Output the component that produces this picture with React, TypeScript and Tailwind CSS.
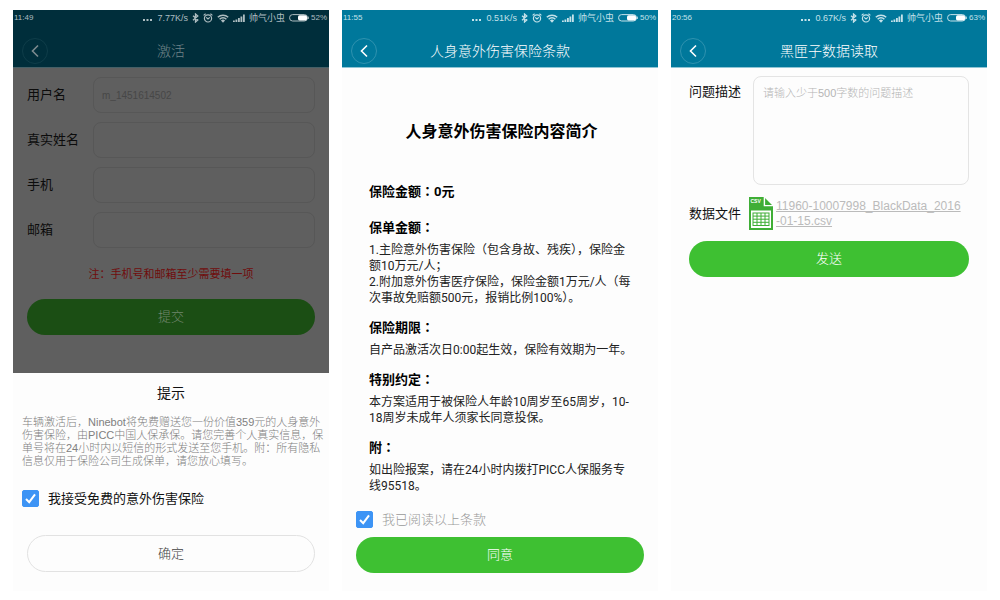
import type { ReactNode } from 'react';
import clsx from 'clsx';

type StatusBarProps = {
  time: string;
  speed: string;
  battery: string;
  dimmed?: boolean;
};

const StatusBar = ({ time, speed, battery, dimmed }: StatusBarProps) => {
  return (
    <div
      className={clsx(
        'flex h-4 items-center justify-between pl-px pr-0.5 text-[8px] leading-4',
        dimmed ? 'text-[#aebdc1]' : 'text-[#c5e2ea]',
      )}>
      <span>{time}</span>
      <div className="flex items-center gap-1">
        <svg width="10" height="8" viewBox="0 0 10 8" fill="currentColor">
          <rect x="0" y="5" width="2" height="2" />
          <rect x="3.5" y="5" width="2" height="2" />
          <rect x="7" y="5" width="2" height="2" />
        </svg>
        <span className="text-[9px]">{speed}</span>
        <svg
          width="7"
          height="10"
          viewBox="0 0 7 10"
          fill="none"
          stroke="currentColor"
          strokeWidth="1.3">
          <path d="M1 2.8 5.8 7 3.5 9V1l2.3 2L1 7.2" />
        </svg>
        <svg
          width="10"
          height="10"
          viewBox="0 0 10 10"
          fill="none"
          stroke="currentColor"
          strokeWidth="1.2">
          <circle cx="5" cy="5.4" r="3.6" />
          <path d="M3.2 4.4 5 6l1.8-1.6M.6 2.4 2.6.8M9.4 2.4 7.4.8" />
        </svg>
        <svg
          width="12"
          height="9"
          viewBox="0 0 12 9"
          fill="none"
          stroke="currentColor"
          strokeWidth="1.5">
          <path d="M.8 3.2a7.6 7.6 0 0 1 10.4 0M2.6 5.2a5 5 0 0 1 6.8 0" />
          <path d="M6 8.8 3.9 6.5a3 3 0 0 1 4.2 0z" fill="currentColor" stroke="none" />
        </svg>
        <svg width="12" height="9" viewBox="0 0 12 9" fill="currentColor">
          <rect x="0" y="6.5" width="1.8" height="1.5" />
          <rect x="2.5" y="5.5" width="1.8" height="2.5" />
          <rect x="5" y="4" width="1.8" height="4" />
          <rect x="7.5" y="2.5" width="1.8" height="5.5" />
          <rect x="10" y="0.5" width="1.8" height="7.5" />
        </svg>
        <span className="text-[9px]">帅气小虫</span>
        <svg width="20" height="8" viewBox="0 0 20 8">
          <rect
            x=".6"
            y=".6"
            width="17.8"
            height="6.4"
            rx="3"
            fill="none"
            stroke="currentColor"
          />
          <rect x="9" y="1.2" width="9" height="5.2" rx="1.6" fill="#fff" />
          <rect x="18.6" y="2.6" width="1.2" height="2.4" fill="currentColor" />
        </svg>
        <span className="-ml-0.5">{battery}</span>
      </div>
    </div>
  );
};

const Header = ({ title, ...status }: StatusBarProps & { title: string }) => {
  const { dimmed } = status;
  return (
    <header
      className={clsx(
        'border-b',
        dimmed ? 'border-[#456067] bg-[#002e3b]' : 'border-[#8fc5d5] bg-[#00789b]',
      )}>
      <StatusBar {...status} />
      <div className="grid grid-cols-[1fr_auto_1fr] items-center px-[9px] pt-3 pb-[3px]">
        <button
          type="button"
          aria-label="返回"
          className={clsx(
            'flex size-[26px] items-center justify-center rounded-full border',
            dimmed ? 'border-[#0f3d49] text-[#7d8b8f]' : 'border-[#2f92af] text-white',
          )}>
          <svg
            width="8"
            height="14"
            viewBox="0 0 8 14"
            fill="none"
            stroke="currentColor"
            strokeWidth="1.6">
            <path d="M7 1.5 1.5 7 7 12.5" />
          </svg>
        </button>
        <h1
          className={clsx(
            'text-sm leading-5 font-light',
            dimmed ? 'text-[#6f8287]' : 'text-white',
          )}>
          {title}
        </h1>
      </div>
    </header>
  );
};

const Phone = ({ children }: { children: ReactNode }) => {
  return <section className="flex flex-col bg-[#fdfdfd]">{children}</section>;
};

const CheckBox = ({ label, className }: { label: string; className: string }) => {
  return (
    <label className={clsx('flex items-center text-[13px] leading-[17px]', className)}>
      <span className="grid size-[17px]">
        <input
          type="checkbox"
          defaultChecked
          className="peer col-start-1 row-start-1 size-[17px] appearance-none rounded-xs border border-[#3d94f5] checked:bg-[#3d94f5]"
        />
        <svg
          className="pointer-events-none invisible col-start-1 row-start-1 peer-checked:visible"
          width="17"
          height="17"
          viewBox="0 0 17 17"
          fill="none"
          stroke="#fff"
          strokeWidth="2">
          <path d="M4 9l3.2 3.2L13 4.4" />
        </svg>
      </span>
      {label}
    </label>
  );
};

const fields = [
  { id: 'username', label: '用户名', value: 'm_1451614502' },
  { id: 'realname', label: '真实姓名', value: '' },
  { id: 'phone', label: '手机', value: '' },
  { id: 'email', label: '邮箱', value: '' },
];

const ActivateScreen = () => {
  return (
    <Phone>
      <Header title="激活" time="11:49" speed="7.77K/s" battery="52%" dimmed />
      <form className="bg-[#5f5f5f] px-3.5 pt-[9px] pb-[38px]">
        <div className="flex flex-col gap-[9px]">
          {fields.map((f) => (
            <div key={f.id} className="flex items-center">
              <label htmlFor={f.id} className="w-[66px] shrink-0 text-[13px] text-[#0c0c0c]">
                {f.label}
              </label>
              <input
                id={f.id}
                defaultValue={f.value}
                className="h-9 w-full min-w-0 rounded-lg border border-[#575757] px-2 text-[10px] text-[#474747]"
              />
            </div>
          ))}
        </div>
        <p className="mt-[18px] text-center text-[11px] leading-4 text-[#700c0c]">
          注：手机号和邮箱至少需要填一项
        </p>
        <button
          type="button"
          className="mt-[17px] h-9 w-full rounded-full bg-[#1b4e14] text-[13px] font-light text-[#71866e]">
          提交
        </button>
      </form>
      <div className="grow pt-2.5 pb-[18px]">
        <h2 className="text-center text-sm leading-5 text-[#111]">提示</h2>
        <p className="mt-[13px] pr-0.5 pl-[9px] text-[11px] leading-[13px] font-light text-[#808080]">
          车辆激活后，Ninebot将免费赠送您一份价值359元的人身意外伤害保险，由PICC中国人保承保。请您完善个人真实信息，保单号将在24小时内以短信的形式发送至您手机。附：所有隐私信息仅用于保险公司生成保单，请您放心填写。
        </p>
        <CheckBox
          label="我接受免费的意外伤害保险"
          className="mt-[22px] gap-[9px] px-[9px] text-[#111]"
        />
        <div className="mt-7 px-3.5">
          <button
            type="button"
            className="h-[37px] w-full rounded-full border border-[#e2e2e2] text-[13px] font-light text-[#444]">
            确定
          </button>
        </div>
      </div>
    </Phone>
  );
};

const terms = [
  {
    title: '保单金额：',
    lines: [
      '1.主险意外伤害保险（包含身故、残疾），保险金额10万元/人；',
      '2.附加意外伤害医疗保险，保险金额1万元/人（每次事故免赔额500元，报销比例100%）。',
    ],
  },
  { title: '保险期限：', lines: ['自产品激活次日0:00起生效，保险有效期为一年。'] },
  {
    title: '特别约定：',
    lines: ['本方案适用于被保险人年龄10周岁至65周岁，10-18周岁未成年人须家长同意投保。'],
  },
  { title: '附：', lines: ['如出险报案，请在24小时内拨打PICC人保服务专线95518。'] },
];

const TermsScreen = () => {
  return (
    <Phone>
      <Header title="人身意外伤害保险条款" time="11:55" speed="0.51K/s" battery="50%" />
      <article className="pt-[52px] pr-6 pl-[27px] font-[Roboto,'Noto_Sans_CJK_SC',sans-serif] text-[#222]">
        <h2 className="text-center text-base leading-6 font-bold text-black">
          人身意外伤害保险内容简介
        </h2>
        <h3 className="mt-[38px] mb-4 font-[Roboto,'Noto_Sans_CJK_TC',sans-serif] text-[13px] leading-5 font-bold text-black">
          保险金额：0元
        </h3>
        <div className="flex flex-col gap-3">
          {terms.map((t) => (
            <section key={t.title}>
              <h3 className="mb-1 font-[Roboto,'Noto_Sans_CJK_TC',sans-serif] text-[13px] leading-5 font-bold text-black">
                {t.title}
              </h3>
              {t.lines.map((l) => (
                <p key={l} className="text-xs leading-4">
                  {l}
                </p>
              ))}
            </section>
          ))}
        </div>
      </article>
      <div className="px-3.5 pt-[17px] pb-[18px]">
        <CheckBox label="我已阅读以上条款" className="gap-[9px] font-light text-[#999]" />
        <button
          type="button"
          className="mt-[9px] h-9 w-full rounded-full bg-[#3ec032] text-[13px] font-light text-white">
          同意
        </button>
      </div>
    </Phone>
  );
};

const CsvIcon = () => {
  return (
    <svg width="24" height="33" viewBox="0 0 24 33" className="shrink-0">
      <path d="M0 0h15l9 9v24H0z" fill="#3fae36" />
      <path d="M15.4 0v8.6H24" fill="none" stroke="#fff" strokeWidth="1.4" />
      <rect x="2" y="13.5" width="20" height="17.5" fill="#fff" />
      <g fill="none" stroke="#3fae36">
        <rect x="4" y="16" width="16" height="12.5" />
        <path d="M4 19.1h16M4 22.2h16M4 25.3h16M8 16v12.5M12 16v12.5M16 16v12.5" />
      </g>
      <text
        x="1.5"
        y="6"
        fontFamily="Liberation Sans, sans-serif"
        fontSize="5"
        fontWeight="700"
        fill="#fff">
        CSV
      </text>
    </svg>
  );
};

const BlackBoxScreen = () => {
  return (
    <Phone>
      <Header title="黑匣子数据读取" time="20:56" speed="0.67K/s" battery="63%" />
      <form className="px-[18px] pt-2">
        <div className="flex items-start">
          <label
            htmlFor="problem"
            className="w-16 shrink-0 pt-1.5 text-[13px] leading-5 text-[#111]">
            问题描述
          </label>
          <textarea
            id="problem"
            placeholder="请输入少于500字数的问题描述"
            className="block h-[109px] w-full min-w-0 resize-none rounded-lg border border-[#e4e4e4] px-[9px] py-2 text-[11px] leading-4 font-light placeholder:text-[#b5b5b5]"
          />
        </div>
        <div className="mt-3 flex items-center">
          <span className="w-[60px] shrink-0 text-[13px] leading-5 text-[#111]">数据文件</span>
          <CsvIcon />
          <a
            href="#"
            className="mr-1.5 ml-[3px] text-xs leading-[15px] break-all text-[#bbb] underline">
            11960-10007998_BlackData_2016-01-15.csv
          </a>
        </div>
        <button
          type="button"
          className="mt-[11px] h-9 w-full rounded-full bg-[#3ec032] text-[13px] font-light text-white">
          发送
        </button>
      </form>
    </Phone>
  );
};

export default function App() {
  return (
    <main className="grid gap-[13px] bg-white px-[13px] py-2.5 font-['Liberation_Sans','Noto_Sans_CJK_SC',sans-serif] md:grid-cols-3">
      <ActivateScreen />
      <TermsScreen />
      <BlackBoxScreen />
    </main>
  );
}
